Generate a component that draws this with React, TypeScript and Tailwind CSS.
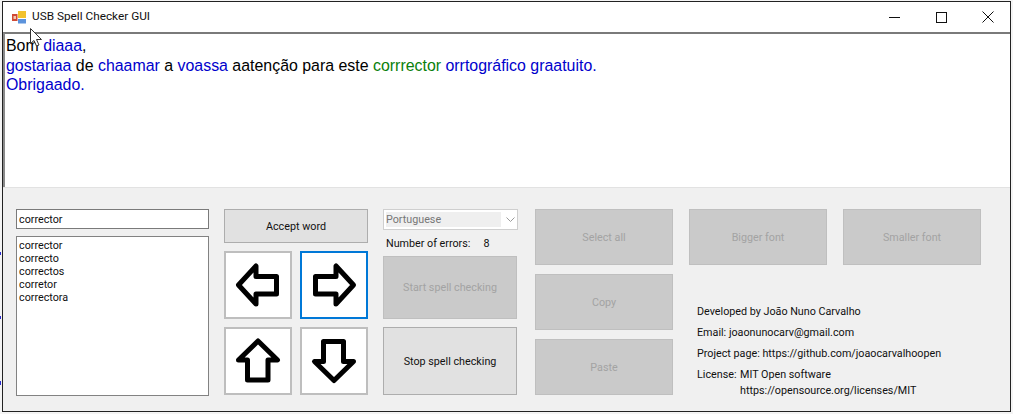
import React from "react";

const DisabledButton = ({ label, className }: { label: string; className: string }) => (
  <div className={`flex items-center justify-center pt-[2px] bg-[#cacaca] border border-[#bfbfbf] text-[#a3a3a3] ${className}`}>
    {label}
  </div>
);

const ArrowButton = ({ d, focused }: { d: string; focused?: boolean }) => (
  <div className={`w-[68px] h-[68px] bg-white border-2 ${focused ? "border-[#0078d7]" : "border-[#bebebe]"}`}>
    <svg width="64" height="64" viewBox="2 2 64 64" fill="none" stroke="#000" strokeWidth="5" strokeLinejoin="round">
      <path d={d} />
    </svg>
  </div>
);

const Blue = ({ children }: { children: React.ReactNode }) => <span className="text-[#0000cc]">{children}</span>;

export default function App() {
  return (
    <div className="relative w-[1013px] h-[414px] overflow-hidden bg-[#f4f4f4] pt-px pl-[2px] pr-[2px] pb-[2px] font-['Liberation_Sans',Arial,sans-serif]">
      <div className="flex flex-col h-full border border-[#222] bg-white">
        {/* title bar */}
        <div className="flex items-center h-[30px] shrink-0 bg-white font-['Roboto',sans-serif]">
          <svg className="ml-[9px]" width="14" height="13" viewBox="0 0 14 13">
            <rect x="0" y="3" width="5.5" height="7" fill="#d04a35" />
            <rect x="1.5" y="5" width="2.5" height="3" fill="#f2c9b0" />
            <rect x="6" y="0" width="8" height="7" fill="#f2c22e" />
            <rect x="6" y="8" width="8" height="4.5" fill="#5c93dc" />
          </svg>
          <span className="ml-[6px] text-[11.8px] text-[#111]">USB Spell Checker GUI</span>
          <div className="flex ml-auto h-full items-center">
            <svg className="mr-[36px]" width="11" height="11" viewBox="0 0 11 11" stroke="#111" fill="none">
              <path d="M0 5.5H11" />
            </svg>
            <svg className="mr-[35px]" width="11" height="11" viewBox="0 0 11 11" stroke="#111" fill="none">
              <rect x="0.5" y="0.5" width="10" height="10" />
            </svg>
            <svg className="mr-[16px]" width="12" height="12" viewBox="0 0 12 12" stroke="#111" fill="none">
              <path d="M0.5 0.5L11.5 11.5M11.5 0.5L0.5 11.5" />
            </svg>
          </div>
        </div>

        {/* text area */}
        <div className="h-[155px] shrink-0 border-t-2 border-t-[#7a7a7a] border-l-2 border-l-[#8a8a8a] pt-[2px] pl-[1px] text-[15.92px] leading-[19.5px] text-black">
          <div>
            Bom <Blue>diaaa</Blue>,
          </div>
          <div>
            <Blue>gostariaa</Blue> de <Blue>chaamar</Blue> a <Blue>voassa</Blue> aatenção para este{" "}
            <span className="text-[#0a800a]">corrrector</span> <Blue>orrtográfico graatuito.</Blue>
          </div>
          <div>
            <Blue>Obrigaado.</Blue>
          </div>
        </div>

        {/* controls */}
        <div className="flex flex-1 bg-[#f0f0f0] border-t border-t-[#e2e2e2] pt-[21px] pl-[13px] text-[10.75px] text-[#111] font-['Roboto',sans-serif]">
          <div className="flex flex-col gap-[7px] w-[193px]">
            <div className="h-[20px] border border-[#7a7a7a] bg-white pl-[2px] leading-[20px]">corrector</div>
            <div className="h-[160px] border border-[#828282] bg-white pl-[2px] pt-[2px] leading-[13px]">
              <div>corrector</div>
              <div>correcto</div>
              <div>correctos</div>
              <div>corretor</div>
              <div>correctora</div>
            </div>
          </div>

          <div className="flex flex-col ml-[15px] w-[144px]">
            <div className="flex items-center justify-center pt-[2px] h-[34px] bg-[#e1e1e1] border border-[#adadad]">Accept word</div>
            <div className="grid grid-cols-2 gap-[8px] mt-[8px]">
              <ArrowButton d="M14.5 34L32 15V25.5H52.5V43H32V53Z" />
              <ArrowButton focused d="M53.5 34L36 15V25.5H15.5V43H36V53Z" />
              <ArrowButton d="M34 14L53.5 33H44V53H23.5V33H14.5Z" />
              <ArrowButton d="M34 53.5L14.5 34.5H23.5V14.5H43.5V34.5H53.5Z" />
            </div>
          </div>

          <div className="flex flex-col ml-[15px] w-[135px]">
            <div className="flex items-center h-[21px] border border-[#cfcfcf] bg-white p-[2px]">
              <div className="flex items-center pt-px h-full w-[115px] bg-[#efefef] text-[#777]">Portuguese</div>
              <svg className="ml-[5px]" width="9" height="5" viewBox="0 0 9 5" fill="none" stroke="#9a9a9a">
                <path d="M0.5 0.5L4.5 4.5L8.5 0.5" />
              </svg>
            </div>
            <div className="flex h-[26px] items-center pl-[3px] pt-[2px]">
              <span>Number of errors:</span>
              <span className="ml-[13px]">8</span>
            </div>
            <DisabledButton label="Start spell checking" className="w-[134px] h-[63px]" />
            <div className="flex items-center justify-center pt-[2px] mt-[8px] w-[134px] h-[68px] bg-[#e1e1e1] border border-[#adadad]">
              Stop spell checking
            </div>
          </div>

          <div className="flex flex-col gap-[9px] ml-[17px] w-[138px]">
            <DisabledButton label="Select all" className="h-[56px]" />
            <DisabledButton label="Copy" className="h-[56px]" />
            <DisabledButton label="Paste" className="h-[56px]" />
          </div>

          <div className="flex flex-col ml-[16px] w-[292px]">
            <div className="flex gap-[16px]">
              <DisabledButton label="Bigger font" className="w-[138px] h-[56px]" />
              <DisabledButton label="Smaller font" className="w-[138px] h-[56px]" />
            </div>
            <div className="flex flex-col pl-[8px] pt-[40px] leading-[14px]">
              <div>Developed by João Nuno Carvalho</div>
              <div className="mt-[7px]">Email: joaonunocarv@gmail.com</div>
              <div className="mt-[7px]">Project page: https://github.com/joaocarvalhoopen</div>
              <div className="mt-[7px] flex">
                <span className="w-[43px]">License:</span>
                <span>MIT Open software</span>
              </div>
              <div className="mt-[2px] pl-[43px]">https://opensource.org/licenses/MIT</div>
            </div>
          </div>
        </div>
      </div>

      {/* bits of the desktop showing left of the window */}
      <div className="absolute left-0 top-[252px] w-px h-[3px] bg-[#2a2ad0]" />
      <div className="absolute left-0 top-[316px] w-px h-[3px] bg-[#2a2ad0]" />
      <div className="absolute left-0 top-[381px] w-px h-[4px] bg-[#2a2ad0]" />

      {/* mouse pointer */}
      <svg className="absolute left-[30px] top-[28px]" width="13" height="20" viewBox="0 0 13 20">
        <path d="M0.5 0.5V15.5L4 12.5L6.5 18L9 17L6.5 11.5H11.5Z" fill="#fff" stroke="#333" strokeWidth="1" />
      </svg>
    </div>
  );
}
